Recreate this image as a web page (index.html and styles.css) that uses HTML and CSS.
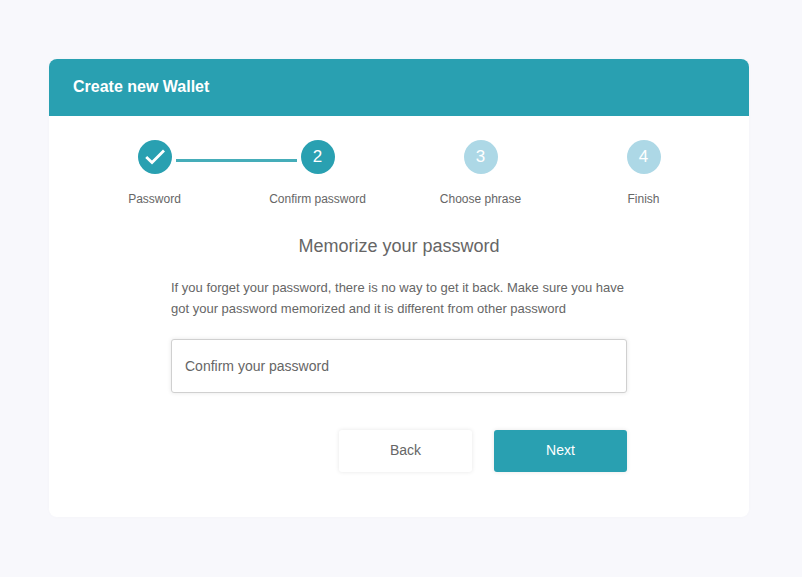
FILE: index.html
```html
<!DOCTYPE html>
<html lang="en">
<head>
<meta charset="utf-8">
<meta name="viewport" content="width=device-width, initial-scale=1">
<title>Create new Wallet</title>
<link rel="stylesheet" href="styles.css">
</head>
<body>
<main class="card">
  <header class="card-header"><h1 class="card-title">Create new Wallet</h1></header>
  <ol class="steps">
    <li class="step step-done">
      <span class="step-mark"><svg class="step-check" viewBox="0 0 20 16" aria-hidden="true"><path d="M1.2 8 L7 13.6 L19 1.4" fill="none" stroke="currentColor" stroke-width="2.8"/></svg></span>
      <span class="step-label">Password</span>
    </li>
    <li class="step step-current" aria-current="step"><span class="step-mark">2</span><span class="step-label">Confirm password</span></li>
    <li class="step"><span class="step-mark">3</span><span class="step-label">Choose phrase</span></li>
    <li class="step"><span class="step-mark">4</span><span class="step-label">Finish</span></li>
  </ol>
  <h2 class="form-title">Memorize your password</h2>
  <form class="form">
    <p class="form-text">If you forget your password, there is no way to get it back. Make sure you have got your password memorized and it is different from other password</p>
    <input class="field" type="password" placeholder="Confirm your password" aria-label="Confirm your password">
    <div class="actions">
      <button class="button" type="button">Back</button>
      <button class="button button-primary" type="submit">Next</button>
    </div>
  </form>
</main>
</body>
</html>
```
FILE: styles.css
```css
* {
  box-sizing: border-box;
}

body {
  margin: 0;
  padding: 59px 53px 59px 49px;
  background: #f8f8fc;
  color: #666;
  font-family: "Liberation Sans", Arial, sans-serif;
}

.card {
  max-width: 700px;
  margin: 0 auto;
  padding-bottom: 45px;
  overflow: hidden;
  border-radius: 8px;
  background: #fff;
  box-shadow: 0 0 4px rgba(0, 0, 0, 0.02);
}

.card-header {
  padding: 16px 24px 17px;
  background: #29a0b1;
  color: #fff;
}

.card-title {
  margin: 0;
  font-size: 16px;
  line-height: 24px;
}

.steps {
  display: grid;
  grid-template-columns: repeat(4, 1fr);
  margin: 0;
  padding: 24px 24px 0;
  list-style: none;
}

.step {
  position: relative;
  display: flex;
  flex-direction: column;
  align-items: center;
  gap: 16px;
}

.step-mark {
  display: flex;
  align-items: center;
  justify-content: center;
  width: 34px;
  height: 34px;
  border-radius: 50%;
  background: #add8e6;
  color: #fff;
  font-size: 17px;
}

.step-done .step-mark,
.step-current .step-mark {
  background: #29a0b1;
}

.step-done::after {
  content: "";
  position: absolute;
  top: 19px;
  left: calc(50% + 21px);
  width: calc(100% - 42px);
  height: 3px;
  background: #45adb9;
}

.step-check {
  width: 20px;
  height: 16px;
}

.step-label {
  font-size: 12px;
  line-height: 18px;
}

.form-title {
  margin: 24px 0 17px;
  font-size: 18px;
  font-weight: 400;
  line-height: 28px;
  text-align: center;
}

.form {
  max-width: 456px;
  margin: 0 auto;
}

.form-text {
  margin: 0 0 20px;
  font-size: 13px;
  line-height: 21px;
}

.field {
  display: block;
  width: 100%;
  height: 54px;
  padding: 0 13px;
  border: 1px solid #d0d0d0;
  border-radius: 3px;
  background: #fff;
  box-shadow: 0 0 4px rgba(0, 0, 0, 0.1);
  color: #666;
  font: inherit;
  font-size: 14px;
}

.field::placeholder {
  color: #666;
  opacity: 1;
}

.actions {
  display: flex;
  justify-content: flex-end;
  gap: 22px;
  margin-top: 37px;
}

.button {
  width: 133px;
  height: 42px;
  padding: 0 0 2px;
  border: 0;
  border-radius: 3px;
  background: #fff;
  box-shadow: 0 0 4px rgba(0, 0, 0, 0.1);
  color: #666;
  font: inherit;
  font-size: 14px;
}

.button-primary {
  background: #29a0b1;
  color: #fff;
}
```
